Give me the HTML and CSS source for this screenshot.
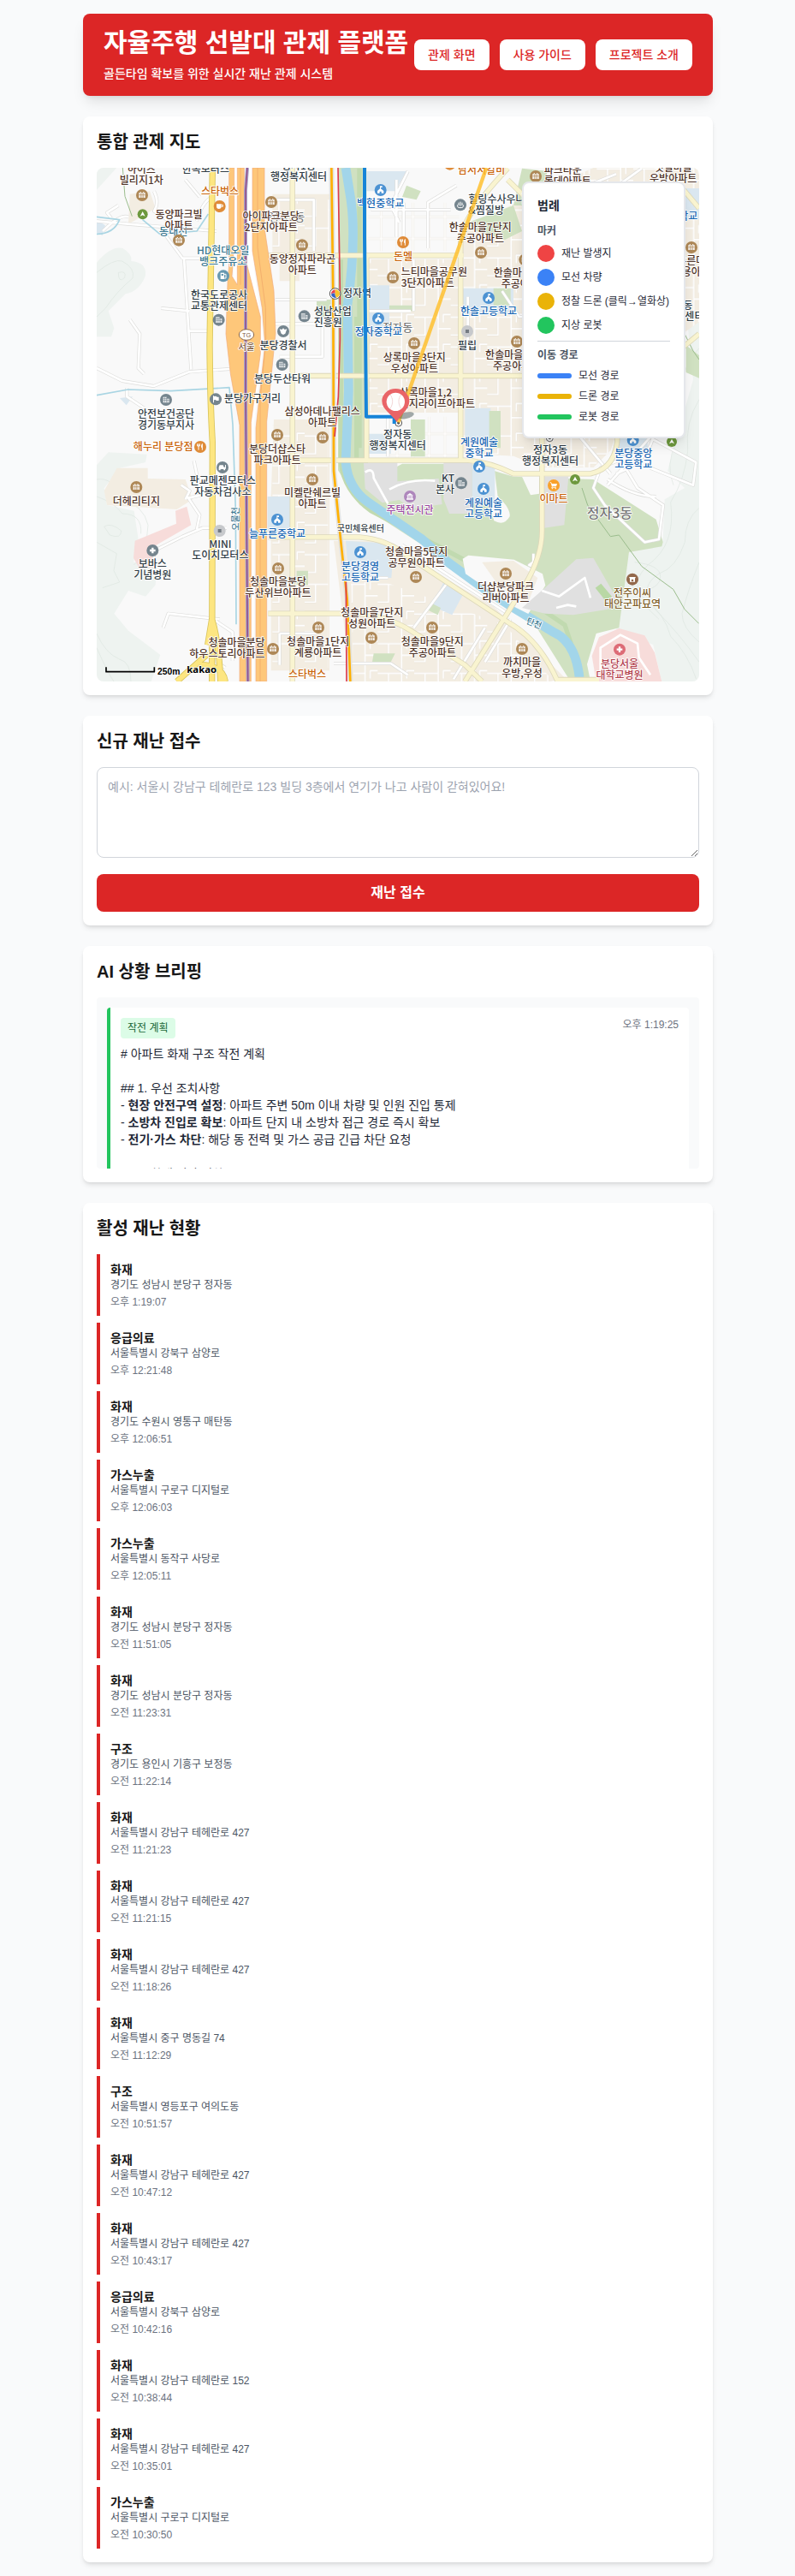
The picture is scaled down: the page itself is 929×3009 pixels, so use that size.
FILE: index.html
```html
<!DOCTYPE html>
<html lang="ko">
<head>
<meta charset="utf-8">
<title>자율주행 선발대 관제 플랫폼</title>
<link rel="stylesheet" href="styles.css">
</head>
<body>
<div class="page">
  <header class="header">
    <div class="brand">
      <h1>자율주행 선발대 관제 플랫폼</h1>
      <p>골든타임 확보를 위한 실시간 재난 관제 시스템</p>
    </div>
    <nav class="nav"><a>관제 화면</a><a>사용 가이드</a><a>프로젝트 소개</a></nav>
  </header>

  <section class="card">
    <h2>통합 관제 지도</h2>
    <div class="map">
      <svg class="map-canvas" viewBox="39 18 2112 1800">
        <defs>
          <pattern id="streets" width="128" height="104" patternUnits="userSpaceOnUse">
            <path class="lane-case" d="M0 22H84V62H128M38 22V84H0M84 62V104M84 0V22M102 40V12H128"/>
            <path class="lane" d="M0 22H84V62H128M38 22V84H0M84 62V104M84 0V22M102 40V12H128"/>
          </pattern>
          <pattern id="blocks" width="56" height="76" patternUnits="userSpaceOnUse">
            <path class="lane-case" d="M0 38H56M28 0V76"/><path class="lane" d="M0 38H56M28 0V76"/>
          </pattern>
          <g id="apt"><circle r="21" fill="#ae8857"/><path fill="#fff" d="M-11-8h4v-3h4v3h6v-3h4v3h4v17h-22z"/><path stroke="#ae8857" stroke-width="2" d="M-5-8V9M0-8V9M5-8V9M-11-1h22"/></g>
          <g id="office"><circle r="21" fill="#75858e"/><path fill="#fff" d="M-10-10h13v6h8v14h-21z"/><path stroke="#75858e" stroke-width="2" d="M-10-4h13M-10 2h21M-5-10v20M1-10v20M6-4v14"/></g>
          <g id="school"><circle r="21" fill="#4c92d2"/><path fill="#fff" d="M-2-14h8v5h-5v4l10 8v8h-8v-6h-6v6h-8v-8l9-8z"/></g>
          <g id="food"><circle r="21" fill="#df8b38"/><path stroke="#fff" stroke-width="3" fill="none" d="M-6-11V11M-10-11v8h8v-8M7-11V11"/><path fill="#fff" d="M7-11q-5 4-4 13h4z"/></g>
          <g id="cafe"><circle r="21" fill="#df8b38"/><path fill="#fff" d="M-11-8h17v8q0 9-9 9-8 0-8-9z"/><path fill="none" stroke="#fff" stroke-width="3" d="M6-5h5v6H6"/></g>
          <g id="fuel"><circle r="21" fill="#6798b0"/><path fill="#fff" d="M-10-11H3V11h-13z"/><path fill="none" stroke="#fff" stroke-width="3" d="M3-6h6V8H3"/><path fill="#6798b0" d="M-7-7H0v6h-7z"/></g>
          <g id="park"><circle r="18" fill="#6d983d"/><path fill="#fff" d="M0-10L9 7 0 3-9 7z"/></g>
          <g id="police"><circle r="21" fill="#75858e"/><path fill="#fff" d="M-13-8l8 2 5-5 5 5 8-2-6 16-7 4-7-4z"/></g>
          <g id="flag"><circle r="21" fill="#75858e"/><path fill="#fff" d="M-9-12h3v2l7-1 4 3h6V5H3l-4-3-5 1v9h-3z"/></g>
          <g id="car"><circle r="21" fill="#75858e"/><path fill="#fff" d="M-13-1l3-7H2l3 7h4V-9h3V5H9v5H4V6h-11v4h-6z"/></g>
          <g id="plain"><circle r="21" fill="#c7c9cc"/><path fill="#747b82" d="M-6-6H6V6H-6z"/></g>
          <g id="cross"><circle r="21" fill="#75858e"/><path stroke="#fff" stroke-width="7" d="M-10 0H10M0-10V10"/></g>
          <g id="redcross"><circle r="21" fill="#dd6b76"/><path stroke="#fff" stroke-width="7" d="M-10 0H10M0-10V10"/></g>
          <g id="museum"><circle r="21" fill="#ae86bc"/><path fill="#fff" d="M-12-4L0-12 12-4zM-12 7h24v4h-24z"/><path stroke="#fff" stroke-width="3" d="M-8-3V8M-3-3V8M3-3V8M8-3V8"/></g>
          <g id="mart"><circle r="21" fill="#f9a12b"/><path fill="#fff" d="M-8-6h20L9 4H-5z"/><path fill="none" stroke="#fff" stroke-width="2.500" d="M-13-10h4L-5 4l-2 4H9"/><circle cx="-5" cy="11" r="2" fill="#fff"/><circle cx="7" cy="11" r="2" fill="#fff"/></g>
          <g id="tomb"><circle r="21" fill="#93694c"/><path fill="#fff" d="M-11-8H11v4H9v13H-9V-4h-2z"/><circle cy="4" r="4" fill="#93694c"/></g>
          <g id="spa"><circle r="21" fill="#75858e"/><path fill="none" stroke="#fff" stroke-width="3" d="M-10 0q-3 10 10 10T10 0M-6 2V-8M0 4V-11M6 2V-8"/></g>
          <g id="office-dot"><circle r="12" fill="#fff" stroke="#555" stroke-width="3"/><circle r="5" fill="#555"/></g>
          <g id="station"><circle r="19" fill="#fff" stroke="#555" stroke-width="3"/><path fill="#e8414d" d="M0-14A14 14 0 0 0-14 2Q-7-6 0 0z"/><path fill="#3564c6" d="M-14 2A14 14 0 0 0 4 14Q-2 8 0 0-6-4-14 2z"/><path fill="#f9c52b" d="M0-14A14 14 0 0 1 4 14Q-2 8 0 0z"/></g>
        </defs>

        <rect x="39" y="18" width="2112" height="1800" fill="#f9f9f9"/>
        <!-- hills -->
        <g class="hill">
          <path d="M39 350Q90 290 130 300 165 320 160 345 215 350 210 395 190 450 140 460L80 520 100 580 90 610H39z"/>
          <path d="M39 1060L80 1015 215 1022 210 1050 120 1070 65 1140 75 1200 170 1220 185 1320 168 1400 250 1410 245 1480 210 1520 150 1500 100 1580 150 1640 262 1725 230 1818H39zM39 18h70L39 95z"/>
          <path d="M2151 380L2080 480 2110 560 2130 760 2040 1080 2100 1140 2030 1180 2024 1320 1905 1365 1860 1635 1990 1690 2020 1818H2151z"/>
        </g>
        <g class="contour">
          <path d="M39 385Q100 335 128 345 175 370 165 405 110 450 70 510L39 540M115 385q30-8 22 18-22 22-22-18M39 1110q60-10 85 70 80 20 95 90l-10 100-40 40M39 1170q60 20 90 60 70 0 65 70M65 1275q25-15 60 15 0 30-40 15zM39 1330l70 40-10 60 20 40-60 20M39 1650q30 70 80 90 40 10 40 78M39 1700q40 90 60 118"/>
          <path d="M2151 650q-60 60-60 150 20 80-20 180-40 80-10 150M2151 830q-50 80-40 180-10 100-60 180 20 150-80 220-60 60-20 110 80 60 100 140 60 60 90 150M2151 1210q-50 40-50 120-30 90-90 110-80 50-10 130 80 80 150 180M2151 1400q-40 100-60 180 0 50 60 100M1925 1400q90 10 90 50t-60 50M1900 1450q40 90 110 150"/>
        </g>
        <!-- residential ground -->
        <g class="ground">
          <path d="M155 110l70-10 20 60-50 30-45 25zM65 1150l45-80h108v37l132 3 25 70-55 35-245-15z"/>
          <path d="M655 110h205v210H655zM680 345h70v70h-70zM660 900h195v880H650V1170zM985 338h325v400H985zM985 756h325v120H985zM1325 338l-15-90 120-70 350-160h371v540l-210 150-100 300-60 60H1600l-100-40-175-10z"/>
          <path d="M870 1325h160l400 230 250 250-50 13H930z"/>
        </g>
        <g fill="url(#streets)">
          <path d="M655 130h200v190H655zM655 920h195v850H655zM985 338h325v400H985zM985 756h325v120H985zM1325 338l-15-90 120-70 350-160h371v540l-210 150-100 300-60 60H1600l-100-40-175-10zM930 1470h120l420 150 170 198H940z"/>
        </g>
        <g fill="url(#blocks)"><path d="M990 140h320v170H990zM1060 890h250v145h-250z"/></g>
        <g class="campus">
          <path d="M990 430h75v170h-75zM985 30h140l-40 70h-100zM638 1170h80v125h-80zM912 1325l170 10-10 120-150-5zM1255 1470l70 40-40 75-70-30zM1320 440h180v90h-180zM1330 860h90v120h-90zM990 950h80v70h-80zM1860 950h110v80h-110zM2080 90h71v110h-71z"/>
          <path d="M120 825l45-5-22 30zM39 200l30 20-10 35-20-10z"/>
        </g>
        <!-- parks -->
        <path class="park" d="M885 18h100v1020l25 70 120 120 320 150 270 190 50 250h-60l-70-180-400-260-280-180-75-120z"/>
        <path class="park" d="M1110 1055h240l150 45 280 10 220 140 24 80-4 15-115 20-35 265-80 20-50 168h-40l-200-318-350-210-160-170z"/>
        <path class="park" d="M1340 210l160-60 30 90-60 30-130-40zM1500 150l30-130 90 10-40 120zM1125 80l50 20-15 30-50-10zM1430 440h60v60h-60zM1065 500h90v20h-90zM1140 900h50v130h-50zM1415 870h40v130h-40zM810 480h60v60h-60zM740 1430h40v50h-40zM1010 1720h75l-15 30h-65zM1215 1545l30 15-10 25-40-20zM2105 640l46 35v80l-46-20z"/>
        <path class="belt" d="M960 20V1000M895 340V1050Q905 1150 1000 1220L1400 1430 1680 1620 1740 1800M950 540V1040"/>
        <path class="river" d="M912 18L930 130Q950 270 918 500L922 800 912 1050Q920 1140 990 1190L1180 1320 1270 1400 1400 1495 1500 1560 1640 1645Q1720 1680 1732 1812"/>
        <path fill="#f9f9f9" d="M1322 1388l20-12 160 15 100 50 10 40-60 100-60-30-160-110zM1430 1050l15 120q45 40 42 70-20 35-55 15l-20-60zM1530 1100h60v60l-30 5z"/>
        <path fill="#f3ede2" d="M1390 1400l110-5 85 60-35 90-100-60z"/>
        <g class="paved">
          <path d="M975 1052h118v65l60-5 85-5 12 90-110 15-40-30-60 10-60-50zM1255 1050h100v180h-80l-20-50zM1605 1100h88l-15 170-70 10zM1530 1560l80-70 110-100 60-5 80 140-30 40-120 20-100-5z"/>
        </g>
        <path class="campus" d="M1355 1060h80v130h-80z"/>
        <path fill="#b9d8a5" d="M1787 1490l20-15 38 45-20 18z"/>
        <path class="hospital" d="M315 1220l40-15 15 65-130 75 10 70-60 10-22-40 5-60 145-60zM1790 1818l-15-90 25-65 70-31 90 25 35 60 25 101z"/>
        <!-- minor streets -->
        <g>
          <path class="street-case" d="M39 205l110 10 310 25M60 240q60-60 90-50M90 195l-15-20 40-25M240 100q20 40 0 70l60 40M270 240l70 95h110M345 335l25 390M390 205q20-70 55-85M350 60l50 60M155 550l35 50-5 120 20 20M39 720l90 45 110 18 125-50 140-10M265 510l100 10M365 590h70M145 790v30l60 40M380 1045l25 120-45 10 40 60-10 50M335 1130l30 20-15 30M240 1420v-60l100-50 70-30h85M272 1630l18-50 180 20M455 1605l60 40v100M460 1670v80l30 20M665 480h180M665 565h180M680 680h150V560M670 130h130v180M680 1650h130M680 1760V1650M870 1755h200l60 40M930 1455h130M1090 260V60M1000 165h280M1115 320V140M1200 300V140l100-60M1100 210l-30-60 60-120M1150 520V340M990 520h150M1060 890v140M1840 1090L1690 910M1990 950L1830 1130M1990 970l150 80-10 80-150-60M1780 1140l40 60 140 130 50-10 15-120-90-60-60-100-70 30zM1830 1110q90 60 170 60M1860 1090q110-40 130-130M1570 1370v30l-15 10 25 8M1460 450l60 90h100M1340 470v190M1700 200l250-180M1560 160l300-120M1490 1600l-90 150M1110 1340l370 240M1150 1630l120-160M1290 1810l110-180"/>
          <path class="street" d="M39 205l110 10 310 25M60 240q60-60 90-50M90 195l-15-20 40-25M240 100q20 40 0 70l60 40M270 240l70 95h110M345 335l25 390M390 205q20-70 55-85M350 60l50 60M155 550l35 50-5 120 20 20M39 720l90 45 110 18 125-50 140-10M265 510l100 10M365 590h70M145 790v30l60 40M380 1045l25 120-45 10 40 60-10 50M335 1130l30 20-15 30M240 1420v-60l100-50 70-30h85M272 1630l18-50 180 20M455 1605l60 40v100M460 1670v80l30 20M665 480h180M665 565h180M680 680h150V560M670 130h130v180M680 1650h130M680 1760V1650M870 1755h200l60 40M930 1455h130M1090 260V60M1000 165h280M1115 320V140M1200 300V140l100-60M1100 210l-30-60 60-120M1150 520V340M990 520h150M1060 890v140M1840 1090L1690 910M1990 950L1830 1130M1990 970l150 80-10 80-150-60M1780 1140l40 60 140 130 50-10 15-120-90-60-60-100-70 30zM1830 1110q90 60 170 60M1860 1090q110-40 130-130M1570 1370v30l-15 10 25 8M1460 450l60 90h100M1340 470v190M1700 200l250-180M1560 160l300-120M1490 1600l-90 150M1110 1340l370 240M1150 1630l120-160M1290 1810l110-180"/>
        </g>
        <path class="street" d="M980 1085q30-20 30 20l50 90M1065 1145q70-40 160-30M1600 1500l60 20 90-65 20 70M1650 1560l40-10 30 5M1805 1780v-80l70-45 60 30 5 50 40 60"/>
        <path class="path-line" d="M130 18l8 100 25 70M1740 1140l20 60 80 110 30-5 80 110 110 80 40 70 50 50M2100 600l30 60 21 30"/>
        <path class="creek" d="M39 190l80 10q-20 50-80 50M200 200l60 50 130-10 40-60M39 815l110-20 150 5 205-12 12 130 10 300 2 400"/>
        <!-- main roads -->
        <g class="road-case">
          <path d="M640 325H1325M745 747H1620M635 1043H1340Q1420 1050 1500 1090H1770Q1865 1070 1865 950M640 1312H960Q1060 1320 1130 1380L1480 1610Q1590 1670 1655 1818M640 1580H960Q1060 1590 1140 1640L1330 1760 1390 1818M725 18V1818M985 330V1040M1315 1040V260Q1330 180 1480 20M1600 750V1290Q1600 1380 1540 1480L1330 1818M1480 60L1580 160M2151 600L2030 700M2151 160L2050 40M1655 1812H1800"/>
        </g>
        <g class="road">
          <path d="M640 325H1325M745 747H1620M635 1043H1340Q1420 1050 1500 1090H1770Q1865 1070 1865 950M640 1312H960Q1060 1320 1130 1380L1480 1610Q1590 1670 1655 1818M640 1580H960Q1060 1590 1140 1640L1330 1760 1390 1818M725 18V1818M985 330V1040M1315 1040V260Q1330 180 1480 20M1600 750V1290Q1600 1380 1540 1480L1330 1818M1480 60L1580 160M2151 600L2030 700M2151 160L2050 40M1655 1812H1800"/>
        </g>
        <path fill="#fff" d="M518 18h72v350l35 250-35 300v900h-30V900L520 740z"/>
        <path class="freeway" d="M503 18h18v270l-8 110 19 30V18h24v302l57 220v130L580 910v908h-40V920l-32-180-16-140 6-180 5-60z"/>
        <path class="freeway" d="M585 18h42v210l33 220 6 150-15 150-16 160v910h-38V930l32-290-10-130-34-200z"/>
        <path class="freeway-line" d="M603 18v280l28 210 1 120-20 200V1818M543 18v410"/>
        <path class="rail-case" d="M567 18l-6 80v700l8 1020"/>
        <path class="rail" d="M567 18l-6 80v700l8 1020"/>
        <path class="bypass-case" d="M445 18L435 640Q437 850 445 980L443 1818M320 1818L430 1720M443 1600q25 80 30 218M443 1600l-15 90M400 1760q80 0 90 58"/>
        <path class="bypass" d="M445 18L435 640Q437 850 445 980L443 1818M320 1818L430 1720M443 1600q25 80 30 218M443 1600l-15 90M400 1760q80 0 90 58"/>
        <path class="metro-case" d="M862 18L868 480 870 1080 893 1310 917 1530 928 1818"/>
        <path class="metro" d="M862 18L868 480 870 1080 893 1310 917 1530 928 1818"/>
        <path class="metro-red" d="M885 18L892 450 892 620 886 820 873 960M913 1470L915 1818"/>
        <g id="labels"></g>
        <g transform="translate(564 603)"><ellipse rx="26" ry="19" fill="#fff" stroke="#8b6748" stroke-width="3"/><text class="tollgate" y="8">TG</text></g>
        <!-- routes and incident pin -->
        <path class="route-drone" d="M1405 18L1096 910"/>
        <path class="route-base" d="M978 18V260L984 890H1082V915"/>
        <ellipse cx="1122" cy="886" rx="30" ry="11" fill="#344" opacity=".45" transform="rotate(-12 1122 886)"/>
        <path fill="#e96467" d="M1091 909C1070 878 1039 866 1039 835a48 43 0 0 1 96 0C1135 866 1108 878 1091 909z"/>
        <circle cx="1087" cy="838" r="32" fill="#fff"/>
        <path class="seam" d="M1068 813q16 22 0 49M1106 813q-16 22 0 49"/>
        <path d="M72 1768v16H241v-16" fill="none" stroke="#000" stroke-width="5"/>
        <text class="scale" x="252" y="1793">250m</text>
        <text class="kakao" x="355" y="1788">kakao</text>
      </svg>
      <aside class="legend">
        <h3>범례</h3>
        <h4>마커</h4>
        <ul class="markers">
          <li><i class="dot red"></i>재난 발생지</li>
          <li><i class="dot blue"></i>모선 차량</li>
          <li><i class="dot yellow"></i><span>정찰 드론 (클릭<span class="arrow">→</span>열화상)</span></li>
          <li><i class="dot green"></i>지상 로봇</li>
        </ul>
        <h4 class="paths-title">이동 경로</h4>
        <ul class="paths">
          <li><i class="bar blue"></i>모선 경로</li>
          <li><i class="bar yellow"></i>드론 경로</li>
          <li><i class="bar green"></i>로봇 경로</li>
        </ul>
      </aside>
    </div>
  </section>

  <section class="card">
    <h2>신규 재난 접수</h2>
    <form class="report">
      <textarea rows="4" placeholder="예시: 서울시 강남구 테헤란로 123 빌딩 3층에서 연기가 나고 사람이 갇혀있어요!"></textarea>
      <button type="button">재난 접수</button>
    </form>
  </section>

  <section class="card">
    <h2>AI 상황 브리핑</h2>
    <div class="briefing">
      <article class="brief">
        <div class="brief-head"><span class="tag">작전 계획</span><time>오후 1:19:25</time></div>
        <div class="brief-text"># 아파트 화재 구조 작전 계획

## 1. 우선 조치사항
- <b>현장 안전구역 설정</b>: 아파트 주변 50m 이내 차량 및 인원 진입 통제
- <b>소방차 진입로 확보</b>: 아파트 단지 내 소방차 접근 경로 즉시 확보
- <b>전기·가스 차단</b>: 해당 동 전력 및 가스 공급 긴급 차단 요청

## 2. 화재 진압 절차</div>
      </article>
    </div>
  </section>

  <section class="card">
    <h2>활성 재난 현황</h2>
    <ul class="incidents">
      <li><b>화재</b><span>경기도 성남시 분당구 정자동</span><time>오후 1:19:07</time></li>
      <li><b>응급의료</b><span>서울특별시 강북구 삼양로</span><time>오후 12:21:48</time></li>
      <li><b>화재</b><span>경기도 수원시 영통구 매탄동</span><time>오후 12:06:51</time></li>
      <li><b>가스누출</b><span>서울특별시 구로구 디지털로</span><time>오후 12:06:03</time></li>
      <li><b>가스누출</b><span>서울특별시 동작구 사당로</span><time>오후 12:05:11</time></li>
      <li><b>화재</b><span>경기도 성남시 분당구 정자동</span><time>오전 11:51:05</time></li>
      <li><b>화재</b><span>경기도 성남시 분당구 정자동</span><time>오전 11:23:31</time></li>
      <li><b>구조</b><span>경기도 용인시 기흥구 보정동</span><time>오전 11:22:14</time></li>
      <li><b>화재</b><span>서울특별시 강남구 테헤란로 427</span><time>오전 11:21:23</time></li>
      <li><b>화재</b><span>서울특별시 강남구 테헤란로 427</span><time>오전 11:21:15</time></li>
      <li><b>화재</b><span>서울특별시 강남구 테헤란로 427</span><time>오전 11:18:26</time></li>
      <li><b>화재</b><span>서울특별시 중구 명동길 74</span><time>오전 11:12:29</time></li>
      <li><b>구조</b><span>서울특별시 영등포구 여의도동</span><time>오전 10:51:57</time></li>
      <li><b>화재</b><span>서울특별시 강남구 테헤란로 427</span><time>오전 10:47:12</time></li>
      <li><b>화재</b><span>서울특별시 강남구 테헤란로 427</span><time>오전 10:43:17</time></li>
      <li><b>응급의료</b><span>서울특별시 강북구 삼양로</span><time>오전 10:42:16</time></li>
      <li><b>화재</b><span>서울특별시 강남구 테헤란로 152</span><time>오전 10:38:44</time></li>
      <li><b>화재</b><span>서울특별시 강남구 테헤란로 427</span><time>오전 10:35:01</time></li>
      <li><b>가스누출</b><span>서울특별시 구로구 디지털로</span><time>오전 10:30:50</time></li>
    </ul>
  </section>
</div>
<script src="map.js"></script>
</body>
</html>
```
FILE: map.js
```js
// [icon, icon x, icon y, text class, text x, first line centre y, lines, anchor, angle]
const places = [
  ['', 0, 0, 'area', 705, 190, '정자1동'],
  ['', 0, 0, 'water', 308, 242, '동내천'],
  ['apt', 198, 114, 'home', 196, 24, '하이츠|빌리지1차'],
  ['', 0, 0, 'biz', 421, 22, '한독모터스'],
  ['cafe', 470, 153, 'eat', 471, 101, '스타벅스'],
  ['park', 200, 181, 'home', 0, 0, ''],
  ['apt', 327, 272, 'home', 327, 183, '동양파크빌|아파트'],
  ['apt', 651, 138, 'home', 650, 187, '아이파크분당|2단지아파트'],
  ['', 0, 0, 'biz', 747, 12, '정자1동|행정복지센터'],
  ['fuel', 483, 397, 'water', 482, 307, 'HD현대오일|뱅크주유소'],
  ['apt', 759, 289, 'home', 760, 337, '동양정자파라곤|아파트'],
  ['office', 467, 551, 'biz', 468, 463, '한국도로공사|교통관제센터'],
  ['office', 767, 538, 'biz', 800, 520, '성남산업|진흥원', 'start'],
  ['police', 693, 591, 'biz', 693, 640, '분당경찰서'],
  ['', 0, 0, 'toll', 564, 645, '서울'],
  ['office', 689, 708, 'biz', 690, 757, '분당두산타워'],
  ['flag', 456, 829, 'biz', 585, 826, '분당가구거리'],
  ['office', 282, 831, 'biz', 282, 880, '안전보건공단|경기동부지사'],
  ['apt', 831, 963, 'home', 830, 873, '삼성아데나팰리스|아파트'],
  ['school', 1034, 96, 'edu', 1034, 143, '백현중학교'],
  ['food', 1277, 5, 'eat', 1388, 25, '남서서갈비'],
  ['spa', 1314, 148, 'biz', 1342, 127, '힐링수사우나|&찜질방', 'start'],
  ['apt', 1386, 315, 'home', 1384, 227, '한솔마을7단지|주공아파트'],
  ['food', 1113, 279, 'eat', 1113, 328, '돈멜'],
  ['apt', 1077, 402, 'home', 1106, 382, '느티마을공무원|3단지아파트', 'start'],
  ['station', 875, 459, 'biz', 903, 459, '정자역', 'start'],
  ['apt', 1540, 340, 'home', 1540, 386, '한솔마을6단지|주공아파트'],
  ['school', 1413, 474, 'edu', 1413, 522, '한솔고등학교'],
  ['', 0, 0, 'area', 1094, 578, '정자동'],
  ['school', 1026, 546, 'edu', 1027, 594, '정자중학교'],
  ['plain', 1338, 591, 'biz', 1338, 640, '필립'],
  ['apt', 1152, 633, 'home', 1153, 682, '상록마을3단지|우성아파트'],
  ['apt', 1512, 627, 'home', 1511, 675, '한솔마을5단지|주공아파트'],
  ['', 0, 0, 'home', 1100, 805, '상록마을1,2|단지라이프아파트', 'start'],
  ['office-dot', 1097, 912, 'biz', 1094, 952, '정자동|행정복지센터'],
  ['school', 1380, 1065, 'edu', 1380, 980, '계원예술|중학교'],
  ['office', 1317, 1123, 'biz', 1293, 1106, 'KT|본사', 'end'],
  ['school', 1395, 1143, 'edu', 1395, 1193, '계원예술|고등학교'],
  ['museum', 1137, 1170, 'art', 1137, 1217, '주택전시관'],
  ['apt', 795, 1110, 'home', 795, 1158, '미켈란쉐르빌|아파트'],
  ['', 0, 0, 'biz small', 964, 1281, '국민체육센터'],
  ['school', 963, 1365, 'edu', 963, 1414, '분당경영|고등학교'],
  ['apt', 1158, 1452, 'home', 1160, 1363, '청솔마을5단지|공무원아파트'],
  ['apt', 1473, 1440, 'home', 1473, 1488, '더샵분당파크|리버아파트'],
  ['apt', 1002, 1665, 'home', 1004, 1576, '청솔마을7단지|성원아파트'],
  ['apt', 816, 1629, 'home', 815, 1678, '청솔마을1단지|계룡아파트'],
  ['', 0, 0, 'eat', 777, 1793, '스타벅스'],
  ['apt', 1215, 1629, 'home', 1216, 1678, '청솔마을9단지|주공아파트'],
  ['apt', 1530, 1704, 'home', 1530, 1752, '까치마을|우방,우성'],
  ['food', 402, 996, 'eat', 272, 996, '해누리 분당점'],
  ['apt', 178, 1137, 'home', 178, 1186, '더헤리티지'],
  ['car', 480, 1068, 'biz', 481, 1116, '판교메젠모터스|자동차검사소'],
  ['plain', 470, 1290, 'biz', 472, 1338, 'MINI|도이치모터스'],
  ['cross', 235, 1359, 'biz', 235, 1407, '보바스|기념병원'],
  ['apt', 657, 1704, 'home', 629, 1683, '청솔마을분당|하우스토리아파트', 'end'],
  ['apt', 672, 954, 'home', 672, 1003, '분당더샵스타|파크아파트'],
  ['school', 672, 1251, 'edu', 672, 1300, '늘푸른중학교'],
  ['apt', 675, 1422, 'home', 675, 1470, '청솔마을분당|두산위브아파트'],
  ['apt', 1578, 48, 'home', 1607, 26, '파크타운|롯데아파트', 'start'],
  ['', 0, 0, 'home', 2060, 17, '샛별마을|우방아파트'],
  ['', 0, 0, 'edu', 2063, 188, '내정중학교'],
  ['apt', 2124, 297, 'home', 2140, 345, '푸른마을|쌍용아파트'],
  ['', 0, 0, 'biz', 2068, 500, '수내3동|행정복지센터'],
  ['office-dot', 1627, 965, 'biz', 1629, 1008, '정자3동|행정복지센터'],
  ['school', 1919, 972, 'edu', 1921, 1020, '분당중앙|고등학교'],
  ['park', 2055, 978, 'home', 0, 0, ''],
  ['park', 1716, 1110, 'home', 0, 0, ''],
  ['mart', 1641, 1131, 'eat', 1641, 1179, '이마트'],
  ['', 0, 0, 'area large', 1837, 1233, '정자3동'],
  ['tomb', 1917, 1460, 'site', 1917, 1509, '전주이씨|태안군파묘역'],
  ['redcross', 1872, 1706, 'med', 1872, 1756, '분당서울|대학교병원'],
  ['', 0, 0, 'water small', 1573, 1612, '탄천', 'middle', 22],
  ['', 0, 0, 'water small', 525, 1248, '오물천', 'middle', -90],
];

const ns = 'http://www.w3.org/2000/svg';
const layer = document.getElementById('labels');
const add = (parent, name, attrs, text) => {
  const el = document.createElementNS(ns, name);
  for (const key in attrs) el.setAttribute(key, attrs[key]);
  if (text) el.textContent = text;
  parent.appendChild(el);
  return el;
};

for (const [icon, ix, iy, kind, x, y, lines, anchor = 'middle', angle] of places) {
  if (icon) add(layer, 'use', { href: '#' + icon, x: ix, y: iy });
  if (!lines) continue;
  const attrs = { class: 'label ' + kind, 'text-anchor': anchor };
  if (angle) attrs.transform = `rotate(${angle} ${x} ${y})`;
  const label = add(layer, 'text', attrs);
  lines.split('|').forEach((line, i) => add(label, 'tspan', { x, y: y + 13 + i * 39 }, line));
}
```
FILE: styles.css
```css
* { box-sizing: border-box; margin: 0; padding: 0; }
body {
  background: #f9fafb;
  color: #171717;
  font-family: "Liberation Sans", "Noto Sans CJK KR", sans-serif;
  font-size: 14px;
  line-height: 20px;
}
ul { list-style: none; }
.page { width: 736px; margin: 0 auto; margin-left: 97px; padding: 16px 0; display: flex; flex-direction: column; gap: 24px; }

.header {
  display: flex; align-items: center; justify-content: space-between;
  padding: 16px 24px; border-radius: 8px;
  background: #dc2626; color: #fff;
  box-shadow: 0 10px 15px -3px rgba(0,0,0,.1), 0 4px 6px -4px rgba(0,0,0,.1);
}
.brand { white-space: nowrap; }
.brand h1 { font-size: 30px; line-height: 36px; font-weight: 700; }
.brand p { margin-top: 8px; color: #fff; font-weight: 500; }
.nav { display: flex; gap: 12px; }
.nav a { padding: 8px 16px; border-radius: 8px; background: #fff; color: #dc2626; font-weight: 500; white-space: nowrap; }

.card {
  padding: 16px; border-radius: 8px; background: #fff;
  box-shadow: 0 4px 6px -1px rgba(0,0,0,.1), 0 2px 4px -2px rgba(0,0,0,.1);
}
.card h2 { margin-bottom: 16px; font-size: 20px; line-height: 28px; font-weight: 600; }

.map { position: relative; height: 600px; border-radius: 8px; overflow: hidden; }
.map-canvas { display: block; width: 704px; height: 600px; }
.map-canvas path { stroke-linejoin: round; }
.hill { fill: #eef3f0; }
.contour { fill: none; stroke: #dde5df; stroke-width: 2; }
.ground { fill: #f3ede2; }
.campus { fill: #dae7f0; }
.park { fill: #d0e1c1; }
.paved { fill: #e0e0e0; }
.hospital { fill: #f7dcda; }
.belt { fill: none; stroke: #c1dab0; stroke-width: 16; }
.river { fill: none; stroke: #a2d5ea; stroke-width: 32; }
.creek { fill: none; stroke: #a9d5e3; stroke-width: 5; }
.path-line { fill: none; stroke: #9bbd8d; stroke-width: 3; }
.lane-case { fill: none; stroke: #e8e2d8; stroke-width: 7; }
.lane { fill: none; stroke: #fff; stroke-width: 5; }
.street-case { fill: none; stroke: #dddddb; stroke-width: 12; }
.street { fill: none; stroke: #fff; stroke-width: 8; }
.road-case { fill: none; stroke: #ddd8ba; stroke-width: 19; }
.road { fill: none; stroke: #f9f4d0; stroke-width: 14; }
.freeway { fill: #fec77a; stroke: #f0aa7c; stroke-width: 2; }
.freeway-line { fill: none; stroke: #f4b06d; stroke-width: 3; }
.rail-case { fill: none; stroke: #aaa5c8; stroke-width: 12; }
.rail { fill: none; stroke: #93508c; stroke-width: 5; }
.bypass-case { fill: none; stroke: #d8c35a; stroke-width: 22; }
.bypass { fill: none; stroke: #fde681; stroke-width: 17; }
.metro-case { fill: none; stroke: #e3e3df; stroke-width: 18; }
.metro { fill: none; stroke: #ffb000; stroke-width: 8; }
.metro-red { fill: none; stroke: #dc3d4f; stroke-width: 5; }
.route-base { fill: none; stroke: #1684d8; stroke-width: 12; }
.route-drone { fill: none; stroke: #ffbe28; stroke-width: 13; opacity: .82; }
.seam { fill: none; stroke: #ecc2c2; stroke-width: 3; stroke-dasharray: 4 2; }
.label { font: 500 36px "Noto Sans CJK KR", sans-serif; paint-order: stroke; stroke: #fff; stroke-width: 5px; stroke-linejoin: round; }
.label.small { font-size: 30px; }
.label.area { font-size: 38px; fill: #777; }
.label.area.large { font-size: 48px; }
.home { fill: #4f3428; }
.biz { fill: #303c45; }
.eat { fill: #c9640b; }
.edu { fill: #1a66b3; }
.water { fill: #3a7790; }
.toll { fill: #80583b; }
.label.toll { font-size: 31px; }
.art { fill: #9a4ba0; }
.site { fill: #80602a; }
.med { fill: #b3414e; }
.tollgate { font: 22px "Liberation Sans", sans-serif; fill: #80583b; text-anchor: middle; }
.scale { font: bold 31px "Liberation Sans", sans-serif; paint-order: stroke; stroke: #fff; stroke-width: 4px; }
.kakao { font: bold 34px "Noto Sans", sans-serif; paint-order: stroke; stroke: #fff; stroke-width: 4px; }

.legend {
  position: absolute; top: 16px; right: 16px; width: 191px; height: 300px; padding: 16px;
  border: 2px solid #e5e7eb; border-radius: 8px; background: #fff;
  box-shadow: 0 10px 15px -3px rgba(0,0,0,.1), 0 4px 6px -4px rgba(0,0,0,.1);
  color: #1f2937; font-size: 12px; line-height: 16px; white-space: nowrap;
}
.legend h3 { margin-bottom: 12px; font-size: 14px; line-height: 20px; font-weight: 700; }
.legend h4 { margin-bottom: 8px; font-size: 12px; font-weight: 600; color: #4b5563; }
.legend ul { display: flex; flex-direction: column; gap: 8px; }
.legend li { display: flex; align-items: center; gap: 8px; }
.legend .paths-title { margin-top: 8px; padding-top: 8px; border-top: 1px solid #d1d5db; }
.arrow { font-family: "Liberation Sans", sans-serif; }
.dot { width: 20px; height: 20px; border-radius: 50%; }
.bar { width: 40px; height: 6px; border-radius: 3px; }
.red { background: #ef4444; }
.blue { background: #3b82f6; }
.yellow { background: #eab308; }
.green { background: #22c55e; }

.report { display: flex; flex-direction: column; gap: 19px; }
.report textarea {
  display: block; width: 100%; height: 106px; padding: 12px; resize: vertical;
  border: 1px solid #d1d5db; border-radius: 8px; background: #fff; font: inherit;
}
.report textarea::placeholder { color: #9ca3af; }
.report button {
  height: 44px; border: 0; border-radius: 8px; background: #dc2626; color: #fff;
  font-family: inherit; font-size: 16px; line-height: 24px; font-weight: 600;
}

.briefing { height: 200px; padding: 12px; border-radius: 4px; background: #f9fafb; overflow: hidden; }
.brief { min-height: 300px; padding: 12px; border-left: 4px solid #22c55e; border-radius: 4px; background: #fff; color: #1f2937; }
.brief-head { display: flex; justify-content: space-between; align-items: flex-start; margin-bottom: 8px; font-size: 12px; line-height: 16px; }
.tag { padding: 4px 8px; border-radius: 4px; background: #dcfce7; color: #166534; }
.brief-head time { color: #6b7280; }
.brief-text { white-space: pre-wrap; }

.incidents { display: flex; flex-direction: column; gap: 8px; }
.incidents li { display: flex; flex-direction: column; padding: 8px 12px; border-left: 4px solid #dc2626; }
.incidents b { font-weight: 600; }
.incidents span, .incidents time { font-size: 12px; line-height: 16px; color: #4b5563; }
.incidents time { margin-top: 4px; color: #6b7280; }
```
